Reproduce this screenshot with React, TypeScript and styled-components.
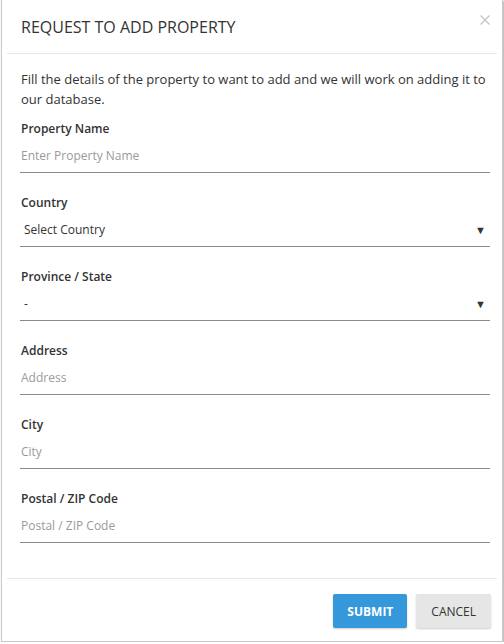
import styled, { createGlobalStyle } from 'styled-components';

const GlobalStyle = createGlobalStyle`
  body {
    margin: 0;
    background: #ffffff;
    font-family: 'Open Sans', 'Liberation Sans', sans-serif;
  }
`;

const fields = [
  { label: 'Property Name', placeholder: 'Enter Property Name' },
  { label: 'Country', select: 'Select Country' },
  { label: 'Province / State', select: '-' },
  { label: 'Address', placeholder: 'Address' },
  { label: 'City', placeholder: 'City' },
  { label: 'Postal / ZIP Code', placeholder: 'Postal / ZIP Code' },
];

const App = (): JSX.Element => {
  return (
    <>
      <GlobalStyle />
      <Modal>
        <Header>
          <Title>Request to add property</Title>
          <CloseButton aria-label='close'>
            <svg width='10' height='10' viewBox='0 0 10 10'>
              <path d='M0.5 0.5 L9.5 9.5 M9.5 0.5 L0.5 9.5' stroke='#c4c4c4' strokeWidth='1.3' />
            </svg>
          </CloseButton>
        </Header>
        <Body>
          <Intro>
            Fill the details of the property to want to add and we will work on
            adding it to our database.
          </Intro>
          {fields.map((f) => (
            <Field key={f.label}>
              <Label>{f.label}</Label>
              {f.select ? (
                <SelectBox>
                  <span>{f.select}</span>
                  <Caret>▼</Caret>
                </SelectBox>
              ) : (
                <Input placeholder={f.placeholder} />
              )}
            </Field>
          ))}
        </Body>
        <Footer>
          <Button $primary>Submit</Button>
          <Button>Cancel</Button>
        </Footer>
      </Modal>
    </>
  );
};

export default App;

const Modal = styled.div`
  width: 500px;
  height: 641px;
  margin-left: 1px;
  background: #fff;
  border: 1px solid #c9c9c9;
  border-top: none;
  box-shadow: 1px 1px 2px rgba(0, 0, 0, 0.35);
  display: flex;
  flex-direction: column;
`;

const Header = styled.div`
  margin: 0 5px;
  padding: 0 7px 0 14px;
  height: 53px;
  border-bottom: 1px solid #e8e8e8;
  display: flex;
  justify-content: space-between;
  align-items: center;
`;

const Title = styled.h1`
  margin: 0;
  font-size: 16px;
  font-weight: 400;
  color: #333;
  text-transform: uppercase;
  line-height: 22px;
  padding-top: 1px;
`;

const CloseButton = styled.button`
  align-self: flex-start;
  margin-top: 15px;
  padding: 0;
  border: none;
  background: none;
  display: flex;
`;

const Body = styled.div`
  padding: 15px 12px 15px 18px;
  color: #333;
`;

const Intro = styled.p`
  margin: 0 0 10px 1px;
  font-size: 13px;
  line-height: 20px;
  color: #333;
`;

const Field = styled.div`
  display: flex;
  flex-direction: column;
  gap: 2px;
  margin-bottom: 20px;
`;

const Label = styled.label`
  font-size: 12px;
  font-weight: 600;
  line-height: 18px;
  color: #333;
  padding: 1px 0 0 1px;
  margin-bottom: -1px;
`;

const Input = styled.input`
  height: 34px;
  box-sizing: border-box;
  border: none;
  border-bottom: 1px solid #8a8a8a;
  padding: 0 0 0 1px;
  font-family: 'Open Sans', 'Liberation Sans', sans-serif;
  font-size: 12px;
  outline: none;
  &::placeholder {
    color: #9a9a9a;
  }
`;

const SelectBox = styled.div`
  height: 34px;
  box-sizing: border-box;
  border-bottom: 1px solid #8a8a8a;
  padding: 0 4px 0 4px;
  display: flex;
  align-items: center;
  justify-content: space-between;
  font-size: 12px;
  color: #333;
`;

const Caret = styled.span`
  font-size: 11px;
  color: #333;
`;

const Footer = styled.div`
  margin: 0 5px;
  padding: 15px 6px 0 0;
  border-top: 1px solid #e8e8e8;
  display: flex;
  justify-content: flex-end;
  gap: 9px;
`;

const Button = styled.button<{ $primary?: boolean }>`
  height: 34px;
  padding: 0 ${({ $primary }) => ($primary ? '14px' : '15px')};
  border: none;
  border-radius: 2px;
  font-family: 'Open Sans', 'Liberation Sans', sans-serif;
  font-size: 12px;
  font-weight: ${({ $primary }) => ($primary ? 700 : 400)};
  text-transform: uppercase;
  color: ${({ $primary }) => ($primary ? '#fff' : '#333')};
  background: ${({ $primary }) => ($primary ? '#3498db' : '#e6e6e6')};
  box-shadow: 0 1px 2px rgba(0, 0, 0, 0.2);
`;
